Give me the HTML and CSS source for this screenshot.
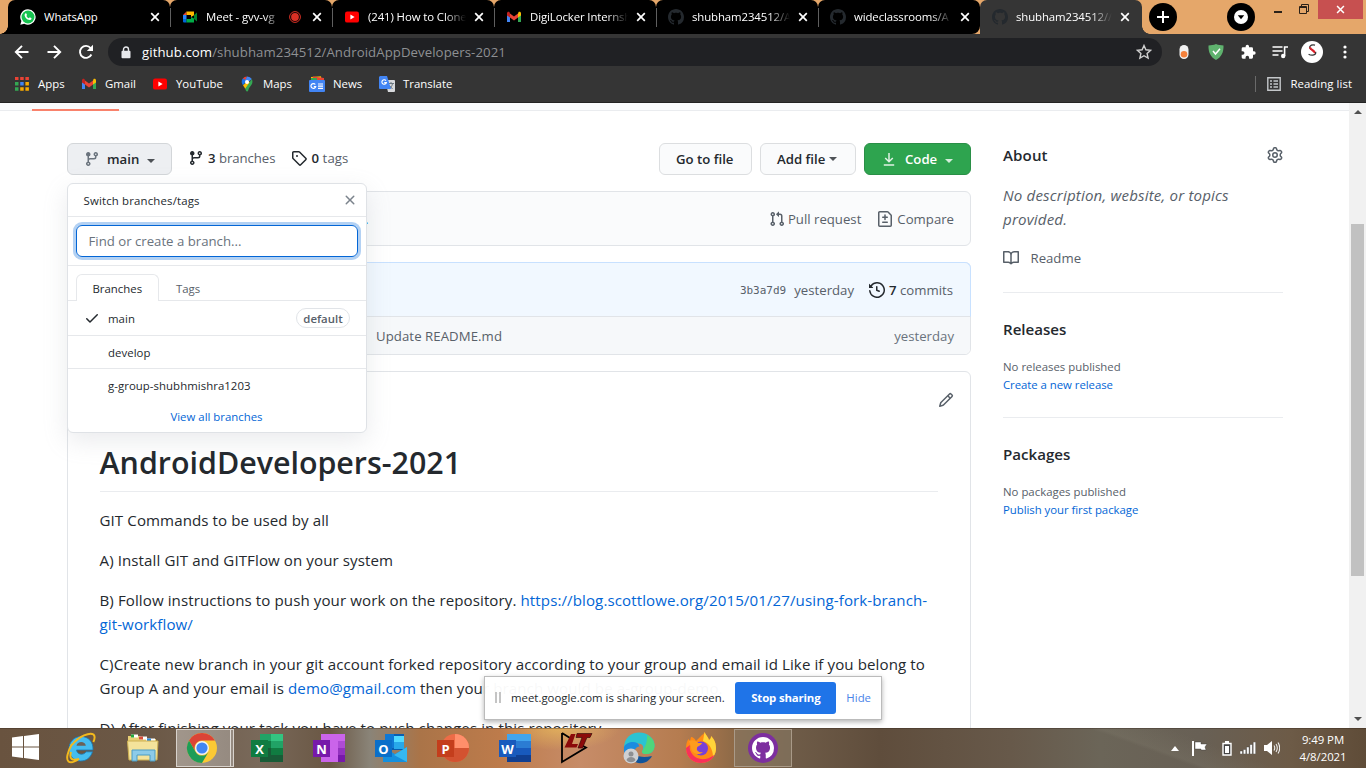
FILE: index.html
```html
<!DOCTYPE html>
<html lang="en">
<head>
<meta charset="utf-8">
<title>shubham234512/AndroidAppDevelopers-2021</title>
<link rel="stylesheet" href="styles.css">
</head>
<body>
<svg class="defs" width="0" height="0">
  <symbol id="branch" viewBox="0 0 16 16"><path d="M11.75 2.5a.75.75 0 100 1.5.75.75 0 000-1.5zm-2.25.75a2.25 2.25 0 113 2.122V6A2.5 2.5 0 0110 8.5H6a1 1 0 00-1 1v1.128a2.251 2.251 0 11-1.5 0V5.372a2.25 2.25 0 111.5 0v1.836A2.492 2.492 0 016 7h4a1 1 0 001-1v-.628A2.25 2.25 0 019.5 3.25zM4.25 12a.75.75 0 100 1.5.75.75 0 000-1.5zM3.5 3.25a.75.75 0 111.5 0 .75.75 0 01-1.5 0z"/></symbol>
  <symbol id="tag" viewBox="0 0 16 16"><path fill-rule="evenodd" d="M2.5 7.775V2.75a.25.25 0 01.25-.25h5.025a.25.25 0 01.177.073l6.25 6.25a.25.25 0 010 .354l-5.025 5.025a.25.25 0 01-.354 0l-6.25-6.25a.25.25 0 01-.073-.177zm-1.5 0V2.75C1 1.784 1.784 1 2.75 1h5.025c.464 0 .91.184 1.238.513l6.25 6.25a1.75 1.75 0 010 2.474l-5.026 5.026a1.75 1.75 0 01-2.474 0l-6.25-6.25A1.75 1.75 0 011 7.775zM6 5a1 1 0 100 2 1 1 0 000-2z"/></symbol>
  <symbol id="pull" viewBox="0 0 16 16"><path d="M7.177 3.073L9.573.677A.25.25 0 0110 .854v4.792a.25.25 0 01-.427.177L7.177 3.427a.25.25 0 010-.354zM3.75 2.5a.75.75 0 100 1.5.75.75 0 000-1.5zm-2.25.75a2.25 2.25 0 113 2.122v5.256a2.251 2.251 0 11-1.5 0V5.372A2.25 2.25 0 011.5 3.25zM11 2.5h-1V4h1a1 1 0 011 1v5.628a2.251 2.251 0 101.5 0V5A2.5 2.5 0 0011 2.5zm1 10.25a.75.75 0 111.5 0 .75.75 0 01-1.5 0zM3.75 12a.75.75 0 100 1.5.75.75 0 000-1.5z"/></symbol>
  <symbol id="diff" viewBox="0 0 16 16"><path d="M2.75 1.5a.25.25 0 00-.25.25v12.5c0 .138.112.25.25.25h10.5a.25.25 0 00.25-.25V4.664a.25.25 0 00-.073-.177l-2.914-2.914a.25.25 0 00-.177-.073H2.75zM1 1.75C1 .784 1.784 0 2.75 0h7.586c.464 0 .909.184 1.237.513l2.914 2.914c.329.328.513.773.513 1.237v9.586A1.75 1.75 0 0113.25 16H2.75A1.75 1.75 0 011 14.25V1.75zm7 1.5a.75.75 0 01.75.75v1.5h1.5a.75.75 0 010 1.5h-1.5v1.5a.75.75 0 01-1.5 0V7h-1.5a.75.75 0 010-1.5h1.5V4A.75.75 0 018 3.25zm-3 8a.75.75 0 01.75-.75h4.5a.75.75 0 010 1.5h-4.5a.75.75 0 01-.75-.75z"/></symbol>
  <symbol id="history" viewBox="0 0 16 16"><path d="M1.643 3.143L.427 1.927A.25.25 0 000 2.104V5.75c0 .138.112.25.25.25h3.646a.25.25 0 00.177-.427L2.715 4.215a6.5 6.5 0 11-1.18 4.458.75.75 0 10-1.493.154 8.001 8.001 0 101.6-5.684zM7.75 4a.75.75 0 01.75.75v2.992l2.028.812a.75.75 0 01-.557 1.392l-2.5-1A.75.75 0 017 8.25v-3.5A.75.75 0 017.75 4z"/></symbol>
  <symbol id="pencil" viewBox="0 0 16 16"><path d="M11.013 1.427a1.75 1.75 0 012.474 0l1.086 1.086a1.75 1.75 0 010 2.474l-8.61 8.61c-.21.21-.47.364-.756.445l-3.251.93a.75.75 0 01-.927-.928l.929-3.25a1.75 1.75 0 01.445-.758l8.61-8.61zm1.414 1.06a.25.25 0 00-.354 0L10.811 3.75l1.439 1.44 1.263-1.263a.25.25 0 000-.354l-1.086-1.086zM11.189 6.25L9.75 4.81l-6.286 6.287a.25.25 0 00-.064.108l-.558 1.953 1.953-.558a.249.249 0 00.108-.064l6.286-6.286z"/></symbol>
  <symbol id="book" viewBox="0 0 16 16"><path fill-rule="evenodd" d="M0 1.75A.75.75 0 01.75 1h4.253c1.227 0 2.317.59 3 1.501A3.744 3.744 0 0111.006 1h4.245a.75.75 0 01.75.75v10.5a.75.75 0 01-.75.75h-4.507a2.25 2.25 0 00-1.591.659l-.622.621a.75.75 0 01-1.06 0l-.622-.621A2.25 2.25 0 005.258 13H.75a.75.75 0 01-.75-.75V1.75zm8.755 3a2.25 2.25 0 012.25-2.25H14.5v9h-3.757c-.71 0-1.4.201-1.992.572l.004-7.322zm-1.504 7.324l.004-5.073-.002-2.253A2.25 2.25 0 005.003 2.5H1.5v9h3.757a3.75 3.75 0 011.994.574z"/></symbol>
  <symbol id="check" viewBox="0 0 16 16"><path d="M13.78 4.22a.75.75 0 010 1.06l-7.25 7.25a.75.75 0 01-1.06 0L2.22 9.28a.75.75 0 011.06-1.06L6 10.94l6.72-6.72a.75.75 0 011.06 0z"/></symbol>
  <symbol id="x" viewBox="0 0 16 16"><path d="M3.72 3.72a.75.75 0 011.06 0L8 6.94l3.22-3.22a.75.75 0 111.06 1.06L9.06 8l3.22 3.22a.75.75 0 11-1.06 1.06L8 9.06l-3.22 3.22a.75.75 0 01-1.06-1.06L6.94 8 3.72 4.78a.75.75 0 010-1.06z"/></symbol>
  <symbol id="gear" viewBox="0 0 16 16"><path fill-rule="evenodd" d="M8 0a8.2 8.2 0 0 1 .701.031C9.444.095 9.99.645 10.16 1.29l.288 1.107c.018.066.079.158.212.224.231.114.454.243.668.386.123.082.233.09.299.071l1.103-.303c.644-.176 1.392.021 1.82.63.27.385.506.792.704 1.218.315.675.111 1.422-.364 1.891l-.814.806c-.049.048-.098.147-.088.294.016.257.016.515 0 .772-.01.147.038.246.088.294l.814.806c.475.469.679 1.216.364 1.891a7.977 7.977 0 0 1-.704 1.217c-.428.61-1.176.807-1.82.63l-1.102-.302c-.067-.019-.177-.011-.3.071a5.909 5.909 0 0 1-.668.386c-.133.066-.194.158-.211.224l-.29 1.106c-.168.646-.715 1.196-1.458 1.26a8.006 8.006 0 0 1-1.402 0c-.743-.064-1.289-.614-1.458-1.26l-.289-1.106c-.018-.066-.079-.158-.212-.224a5.738 5.738 0 0 1-.668-.386c-.123-.082-.233-.09-.299-.071l-1.103.303c-.644.176-1.392-.021-1.82-.63a8.12 8.12 0 0 1-.704-1.218c-.315-.675-.111-1.422.363-1.891l.815-.806c.05-.048.098-.147.088-.294a6.214 6.214 0 0 1 0-.772c.01-.147-.038-.246-.088-.294l-.815-.806C.635 6.045.431 5.298.746 4.623a7.92 7.92 0 0 1 .704-1.217c.428-.61 1.176-.807 1.82-.63l1.102.302c.067.019.177.011.3-.071.214-.143.437-.272.668-.386.133-.066.194-.158.211-.224l.29-1.106C6.009.645 6.556.095 7.299.03 7.53.01 7.764 0 8 0Zm-.571 1.525c-.036.003-.108.036-.137.146l-.289 1.105c-.147.561-.549.967-.998 1.189-.173.086-.34.183-.5.29-.417.278-.97.423-1.529.27l-1.103-.303c-.109-.03-.175.016-.195.045-.22.312-.412.644-.573.99-.014.031-.021.11.059.19l.815.806c.411.406.562.957.53 1.456a4.709 4.709 0 0 0 0 .582c.032.499-.119 1.05-.53 1.456l-.815.806c-.081.08-.073.159-.059.19.162.346.353.677.573.989.02.03.085.076.195.046l1.102-.303c.56-.153 1.113-.008 1.53.27.161.107.328.204.501.29.447.222.85.629.997 1.189l.289 1.105c.029.109.101.143.137.146a6.6 6.6 0 0 0 1.142 0c.036-.003.108-.036.137-.146l.289-1.105c.147-.561.549-.967.998-1.189.173-.086.34-.183.5-.29.417-.278.97-.423 1.529-.27l1.103.303c.109.029.175-.016.195-.045.22-.313.411-.644.573-.99.014-.031.021-.11-.059-.19l-.815-.806c-.411-.406-.562-.957-.53-1.456a4.709 4.709 0 0 0 0-.582c-.032-.499.119-1.05.53-1.456l.815-.806c.081-.08.073-.159.059-.19a6.464 6.464 0 0 0-.573-.989c-.02-.03-.085-.076-.195-.046l-1.102.303c-.56.153-1.113.008-1.53-.27a4.44 4.44 0 0 0-.501-.29c-.447-.222-.85-.629-.997-1.189l-.289-1.105c-.029-.11-.101-.143-.137-.146a6.6 6.6 0 0 0-1.142 0ZM11 8a3 3 0 1 1-6 0 3 3 0 0 1 6 0ZM9.5 8a1.5 1.5 0 1 0-3.001.001A1.5 1.5 0 0 0 9.5 8Z"/></symbol>
  <symbol id="octocat" viewBox="0 0 16 16"><path d="M8 0C3.58 0 0 3.58 0 8c0 3.54 2.29 6.53 5.47 7.59.4.07.55-.17.55-.38 0-.19-.01-.82-.01-1.49-2.01.37-2.53-.49-2.69-.94-.09-.23-.48-.94-.82-1.13-.28-.15-.68-.52-.01-.53.63-.01 1.08.58 1.23.82.72 1.21 1.87.87 2.33.66.07-.52.28-.87.51-1.07-1.78-.2-3.64-.89-3.64-3.95 0-.87.31-1.59.82-2.15-.08-.2-.36-1.02.08-2.12 0 0 .67-.21 2.2.82.64-.18 1.32-.27 2-.27.68 0 1.36.09 2 .27 1.53-1.04 2.2-.82 2.2-.82.44 1.1.16 1.92.08 2.12.51.56.82 1.27.82 2.15 0 3.07-1.87 3.75-3.65 3.95.29.25.54.73.54 1.48 0 1.07-.01 1.93-.01 2.2 0 .21.15.46.55.38A8.013 8.013 0 0016 8c0-4.42-3.58-8-8-8z"/></symbol>
  <symbol id="close" viewBox="0 0 10 10"><path d="M1.2 1.2l7.6 7.6M8.8 1.2L1.2 8.8" stroke="currentColor" stroke-width="1.7" fill="none"/></symbol>
  <symbol id="youtube" viewBox="0 0 16 16"><rect x="1" y="2.6" width="14" height="11" rx="2.2" fill="#f00"/><path d="M6.4 5.6v5l4.2-2.5z" fill="#fff"/></symbol>
  <symbol id="gmail" viewBox="0 0 16 16"><path d="M1 4v9h3V7z" fill="#4285f4"/><path d="M15 4v9h-3V7z" fill="#34a853"/><path d="M12 4.6v4L15 6.4V4.2c0-1.4-1.5-2-2.4-1.2z" fill="#fbbc04"/><path d="M4 4.6v4L1 6.4V4.2C1 2.8 2.500 2.200 3.400 3z" fill="#c5221f"/><path d="M4 4.400l4 3 4-3v4.200l-4 3-4-3z" fill="#ea4335"/></symbol>
</svg>

<header class="titlebar">
  <div class="tab tab-first">
    <svg class="fav" viewBox="0 0 16 16"><path d="M8 .3A7.700 7.700 0 0 0 1.400 12L.3 15.800l4-1A7.700 7.700 0 1 0 8 .3z" fill="#fff"/><circle cx="8" cy="8" r="6.500" fill="#16c350"/><path d="M5.300 4.400c.6-.5 1-.2 1.200.3l.5 1.200-.6 1c.6 1.200 1.400 1.900 2.500 2.400l.9-1 1.700.9c.2.900-.8 1.900-1.900 1.900C7 11 4.600 8 4.600 6.100c0-.8.3-1.300.7-1.700z" fill="#fff"/></svg>
    <span class="tab-title">WhatsApp</span>
    <svg class="tab-x"><use href="#close"/></svg>
  </div>
  <div class="tab">
    <svg class="fav" viewBox="0 0 16 16"><path d="M1 6h3.500v4H1z" fill="#2684fc"/><path d="M4.500 2.500V6H1z" fill="#ea4335"/><path d="M4.500 2.500H12v3.800L9 8V6H4.500z" fill="#ffba00"/><path d="M1 10h3.500v3.500H2a1 1 0 0 1-1-1z" fill="#0066da"/><path d="M4.500 10H9V8l3 1.500v4H4.500z" fill="#00ac47"/><path d="M12 6l3-2.500v9L12 10z" fill="#00832d"/></svg>
    <span class="tab-title tab-title-short fade">Meet - gvv-vg</span>
    <svg class="rec" viewBox="0 0 12 12"><circle cx="6" cy="6" r="5.400" fill="none" stroke="#d93025"/><circle cx="6" cy="6" r="3.900" fill="#d93025"/></svg>
    <svg class="tab-x"><use href="#close"/></svg>
  </div>
  <div class="tab">
    <svg class="fav"><use href="#youtube"/></svg>
    <span class="tab-title fade">(241) How to Clone</span>
    <svg class="tab-x"><use href="#close"/></svg>
  </div>
  <div class="tab">
    <svg class="fav"><use href="#gmail"/></svg>
    <span class="tab-title fade">DigiLocker Internsh</span>
    <svg class="tab-x"><use href="#close"/></svg>
  </div>
  <div class="tab">
    <svg class="fav cat"><use href="#octocat"/></svg>
    <span class="tab-title fade">shubham234512/A</span>
    <svg class="tab-x"><use href="#close"/></svg>
  </div>
  <div class="tab tab-before">
    <svg class="fav cat"><use href="#octocat"/></svg>
    <span class="tab-title fade">wideclassrooms/A</span>
    <svg class="tab-x"><use href="#close"/></svg>
  </div>
  <div class="tab tab-active">
    <svg class="fav cat"><use href="#octocat"/></svg>
    <span class="tab-title fade">shubham234512//A</span>
    <svg class="tab-x"><use href="#close"/></svg>
  </div>
  <svg class="round-btn" viewBox="0 0 28 28"><circle cx="14" cy="14" r="14"/><path d="M14 8v12M8 14h12" stroke="#fff" stroke-width="2"/></svg>
  <svg class="round-btn search-tabs" viewBox="0 0 28 28"><circle cx="14" cy="14" r="14"/><circle cx="14" cy="14" r="7" fill="#fff"/><path d="M10.800 12.200h6.400L14 16.200z"/></svg>
  <div class="window-controls">
    <svg class="min" viewBox="0 0 8 2"><path d="M0 0h8v2H0z" fill="#2b2118"/></svg>
    <svg class="restore" viewBox="0 0 10 10"><path d="M2.500 2.500V.5h7v7H7.500M.5 2.500h7v7h-7zM.5 3.500h7" fill="none" stroke="#2b2118"/></svg>
    <div class="win-close"><svg><use href="#close"/></svg></div>
  </div>
</header>

<div class="toolbar">
  <svg class="nav" viewBox="0 0 16 16"><path d="M14.500 8H2M8 1.800L1.800 8 8 14.200" fill="none" stroke="#fff" stroke-width="1.900"/></svg>
  <svg class="nav" viewBox="0 0 16 16"><path d="M1.500 8H14M8 1.800L14.200 8 8 14.200" fill="none" stroke="#fff" stroke-width="1.900"/></svg>
  <svg class="nav" viewBox="0 0 16 16"><path d="M13.400 10.500A6 6 0 1 1 12.600 4L13 4.500" fill="none" stroke="#fff" stroke-width="1.900"/><path d="M15 .8v6.200H8.800z" fill="#fff"/></svg>
  <div class="omnibox">
    <svg class="lock" viewBox="0 0 10 13"><path d="M2.500 5V3.500a2.500 2.500 0 0 1 5 0V5" fill="none" stroke="#e8eaed" stroke-width="1.400"/><rect x=".5" y="4.800" width="9" height="7.400" rx="1" fill="#e8eaed"/></svg>
    <span class="url"><b>github.com</b>/shubham234512/AndroidAppDevelopers-2021</span>
    <svg class="star" viewBox="0 0 16 16"><path d="M8 1.500l1.900 4.300 4.700.5-3.500 3.100 1 4.700L8 11.700l-4.100 2.400 1-4.700L1.400 6.300l4.700-.5z" fill="none" stroke="#d0d0d0" stroke-width="1.400"/></svg>
  </div>
  <svg class="ext" viewBox="0 0 16 16"><rect x="3.500" y="1" width="9" height="14" rx="4.500" fill="#f1f1f1"/><circle cx="8" cy="10.300" r="3.300" fill="#f5813a"/></svg>
  <svg class="ext" viewBox="0 0 16 16"><path d="M8 0c2.300 1 5 1.300 7.500 1.500C15.800 8 13.600 13 8 16 2.400 13 .2 8 .5 1.500 3 1.300 5.700 1 8 0z" fill="#5fb26e"/><path d="M5 7l2.500 3L12 4.800" stroke="#fff" stroke-width="1.500" fill="none"/></svg>
  <svg class="ext" viewBox="0 0 24 24"><path d="M21 11h-1.500V7a2 2 0 0 0-2-2h-4V3.500a2.500 2.500 0 0 0-5 0V5h-4a2 2 0 0 0-2 2v3.800H4a2.700 2.700 0 0 1 0 5.400H2.500V20a2 2 0 0 0 2 2h3.800v-1.500a2.700 2.700 0 0 1 5.400 0V22h3.800a2 2 0 0 0 2-2v-4H21a2.500 2.500 0 0 0 0-5z" fill="#fff"/></svg>
  <svg class="ext" viewBox="0 0 16 16"><path d="M.5 3h10M.5 7h10M.5 11h6" stroke="#fff" stroke-width="1.700"/><path d="M12.600 12V3H16" stroke="#fff" stroke-width="1.600" fill="none"/><circle cx="11.200" cy="12" r="2.200" fill="#fff"/></svg>
  <svg class="avatar" viewBox="0 0 22 22"><circle cx="11" cy="11" r="11" fill="#fff"/><path d="M14 4.200C9.500 3.200 7 6.200 10 8.400" fill="none" stroke="#333" stroke-width="1.300"/><path d="M9 6.200c0 3 5.400 3.200 5 6.200" fill="none" stroke="#d8202a" stroke-width="2.200"/><path d="M14.600 11c1 2.800-3.600 4.200-7 2.200" fill="none" stroke="#333" stroke-width="1.300"/></svg>
  <svg class="kebab" viewBox="0 0 4 14"><circle cx="2" cy="2" r="1.600"/><circle cx="2" cy="7" r="1.600"/><circle cx="2" cy="12" r="1.600"/></svg>
</div>

<nav class="bookmarks">
  <div class="bm bm-apps"><svg viewBox="0 0 14 14"><g fill="#ea4335"><path d="M0 0h3.500v3H0zM5.200 0h3.500v3H5.200zM10.400 0h3.500v3h-3.500z"/></g><path d="M0 5h3.500v3.500H0zM0 10.300h3.500v3.500H0z" fill="#34a853"/><path d="M5.200 5h3.500v3.500H5.200z" fill="#4285f4"/><path d="M10.400 5h3.500v3.500h-3.500zM5.200 10.300h3.500v3.500H5.200zM10.400 10.300h3.500v3.500h-3.500z" fill="#f9ab00"/></svg>Apps</div>
  <div class="bm bm-gmail"><svg><use href="#gmail"/></svg>Gmail</div>
  <div class="bm bm-yt"><svg><use href="#youtube"/></svg>YouTube</div>
  <div class="bm bm-maps"><svg viewBox="0 0 16 16"><path d="M8 .5a5.400 5.400 0 0 0-4.200 2L6.500 5z" fill="#ea4335"/><path d="M3.800 2.500C2 5 2.600 7.500 4 9.300l4-4.500z" fill="#1a73e8"/><path d="M8 .5l-2 4 3 2 3.800-3.400A5.400 5.400 0 0 0 8 .5z" fill="#4285f4"/><path d="M4 9.300c1 1.400 1.800 2.400 2.300 3.600L12 7 9 5z" fill="#fbbc04"/><path d="M12.800 3.100c1.400 3 .4 5-1.200 7-1.500 1.800-2 3-2.400 4.500-.3 1.200-1.900 1.200-2.300 0l-.7-1.800z" fill="#34a853"/><circle cx="8" cy="5.900" r="2" fill="#fff"/></svg>Maps</div>
  <div class="bm bm-news"><svg viewBox="0 0 16 16"><path d="M2 1l10-.8.5 4H2z" fill="#fbbc04"/><path d="M4 .5l11 1.500v5H3z" fill="#ea4335"/><path d="M2 2h6v4H2z" fill="#34a853"/><rect y="4" width="16" height="12" rx="1" fill="#4285f4"/><path d="M6.300 8.500a2.400 2.400 0 1 0 .4 2H4.800M9 8h5M9 10.200h5M9 12.400h5" stroke="#fff" stroke-width="1.200" fill="none"/></svg>News</div>
  <div class="bm bm-translate"><svg viewBox="0 0 16 16"><path d="M6 4h9a1 1 0 0 1 1 1v10a1 1 0 0 1-1 1H9z" fill="#d7d9dc"/><path d="M9 7.500h6M12 6v1.500M10 13c2-1.500 3.200-3 3.500-5.500M10.500 9.500l3 3.500" stroke="#6b7780" fill="none"/><path d="M1 0h7l4 13H1a1 1 0 0 1-1-1V1z" fill="#4285f4"/><path d="M7 4.600a2.300 2.300 0 1 0 .4 2H5.200" stroke="#fff" stroke-width="1.100" fill="none"/></svg>Translate</div>
  <div class="bm reading"><svg viewBox="0 0 14 14"><path d="M.8.8h12.400v12.400H.8zM3 4h2M6.500 4H11M3 7h2M6.500 7H11M3 10h2M6.500 10H11" fill="none" stroke="#c4c7ca" stroke-width="1.400"/></svg>Reading list</div>
</nav>

<div class="viewport">
  <div class="page">
    <div class="repo-nav"><i></i></div>
    <div class="layout">
      <main class="main">
        <div class="file-nav">
          <button class="btn btn-branch"><svg class="oi"><use href="#branch"/></svg>main<i class="caret"></i></button>
          <a class="stat stat-branches"><svg class="oi"><use href="#branch"/></svg><b>3</b> branches</a>
          <a class="stat stat-tags"><svg class="oi"><use href="#tag"/></svg><b>0</b> tags</a>
          <button class="btn btn-goto">Go to file</button>
          <button class="btn btn-add">Add file<i class="caret"></i></button>
          <button class="btn btn-code"><svg class="oi" viewBox="0 0 16 16"><path d="M8 2v8.500M4.200 7L8 10.700 11.800 7M2.800 14h10.400" fill="none" stroke="currentColor" stroke-width="1.500"/></svg>Code<i class="caret"></i></button>
          <section class="menu">
            <div class="menu-head">Switch branches/tags<svg class="oi"><use href="#x"/></svg></div>
            <div class="menu-filter"><div class="field">Find or create a branch...</div></div>
            <div class="menu-tabs"><span class="mt on">Branches</span><span class="mt">Tags</span></div>
            <div class="item current"><svg class="oi"><use href="#check"/></svg><span>main</span><em>default</em></div>
            <div class="item">develop</div>
            <div class="item last">g-group-shubhmishra1203</div>
            <a class="all">View all branches</a>
          </section>
        </div>
        <div class="box compare"><span class="dot">.</span><a class="pr"><svg class="oi"><use href="#pull"/></svg>Pull request</a><a><svg class="oi"><use href="#diff"/></svg>Compare</a></div>
        <div class="files">
          <div class="commit"><code>3b3a7d9</code><span class="when">yesterday</span><svg class="oi"><use href="#history"/></svg><span class="commits"><b>7</b> commits</span></div>
          <div class="file-row"><span>Update README.md</span><span>yesterday</span></div>
        </div>
        <div class="readme">
          <div class="readme-head"><svg class="oi"><use href="#pencil"/></svg></div>
          <article>
            <h1>AndroidDevelopers-2021</h1>
            <p>GIT Commands to be used by all</p>
            <p>A) Install GIT and GITFlow on your system</p>
            <p>B) Follow instructions to push your work on the repository. <a>https://blog.scottlowe.org/2015/01/27/using-fork-branch-<br>git-workflow/</a></p>
            <p>C)Create new branch in your git account forked repository according to your group and email id Like if you belong to<br>Group A and your email is <a>demo@gmail.com</a> then your branch would be a-group-demo.</p>
            <p>D) After finishing your task you have to push changes in this repository</p>
          </article>
        </div>
      </main>
      <aside class="side">
        <section class="about">
          <h2>About<svg class="oi"><use href="#gear"/></svg></h2>
          <p class="desc">No description, website, or topics<br>provided.</p>
          <div class="readme-link"><svg class="oi"><use href="#book"/></svg>Readme</div>
        </section>
        <section class="releases"><h2>Releases</h2><p>No releases published</p><a>Create a new release</a></section>
        <section class="packages"><h2>Packages</h2><p>No packages published</p><a>Publish your first package</a></section>
      </aside>
    </div>
  </div>
  <div class="scrollbar"><i class="up"></i><div class="thumb"></div><i class="down"></i></div>
  <div class="share">
    <i class="grip"></i><span>meet.google.com is sharing your screen.</span><button>Stop sharing</button><a>Hide</a>
  </div>
</div>

<footer class="taskbar">
  <div class="start"><svg viewBox="0 0 27 26"><path d="M0 3.600l11-1.500v10.400H0zM12 2l15-2v12.500H12zM0 13.500h11v10.400L0 22.400zM12 13.500h15V26l-15-2z" fill="#fff"/></svg></div>
  <div class="task"><svg viewBox="0 0 32 32"><path d="M16 4.500c7 0 12.500 5 12 13.500H11.500c.5 5 7.500 5.500 9.500 1.800h6.500C25.500 26 21 29 15.700 29 9 29 4 24 4 17S9 4.500 16 4.500z" fill="#45bdf0" stroke="#1679b8" stroke-width=".8"/><path d="M11.500 13.800c.6-5 8.800-5 9.300 0z" fill="#6b6258"/><path d="M7 12C3 19 .5 27 3.500 29.500 6 31.500 11 29 14 27 7 29 4 27 6 20M7 13C14 4 25 0 28.500 2.500c2 2 1 5-.2 7.500" fill="none" stroke="#f3b91d" stroke-width="2"/></svg></div>
  <div class="task"><svg viewBox="0 0 32 32"><path d="M1 4h12l2 3h14v4H1z" fill="#e8cf74"/><path d="M4 2.500h7v3H4z" fill="#fff"/><path d="M4 2.500h3v3H4z" fill="#25a83c"/><path d="M12 4.500h8v3h-8z" fill="#fff"/><path d="M12 4.500h4v3h-4z" fill="#d84e3a"/><path d="M19 6.500h9v3h-9z" fill="#fff"/><path d="M20 6.500h4v3h-4z" fill="#2d8ce0"/><path d="M.5 9H31l-1 19H2z" fill="#f4e39b" stroke="#cdb052"/><path d="M5 18h23v11h-5v-6H10v6H5z" fill="#8ccbe8" stroke="#4a9cc4"/></svg></div>
  <div class="task task-chrome"><svg viewBox="0 0 32 32"><circle cx="16" cy="16" r="15" fill="#fbc934"/><path d="M3 8.500A15 15 0 0 1 29 8.500H16a7.500 7.500 0 0 0-6.500 11.200z" fill="#db4437"/><path d="M3 8.500l6.500 11.200A7.500 7.500 0 0 0 22.500 20L16 31A15 15 0 0 1 3 8.500z" fill="#1e9d57"/><circle cx="16" cy="16" r="7" fill="#f3f3f3"/><circle cx="16" cy="16" r="5.600" fill="#4285f4"/></svg></div>
  <div class="task"><svg viewBox="0 0 32 32"><path d="M9 2h23v28H9z" fill="#21a366"/><path d="M20 2h12v7H20z" fill="#33c481"/><path d="M9 9h11v7H9zM20 16h12v7H20z" fill="#107c41"/><path d="M9 16h11v7H9zM9 23h23v7H9z" fill="#185c37"/><path d="M0 8h17v17H0z" fill="#107c41"/><text class="glyph" x="8.500" y="21.500">X</text></svg></div>
  <div class="task"><svg viewBox="0 0 32 32"><path d="M8 2h24v28H8z" fill="#ca64ea"/><path d="M25 9h7v7h-7z" fill="#ae4bd5"/><path d="M25 16h7v7h-7z" fill="#9332bf"/><path d="M25 23h7v7h-7z" fill="#7719aa"/><path d="M0 8h17v17H0z" fill="#7719aa"/><text class="glyph" x="8.500" y="21.500">N</text></svg></div>
  <div class="task"><svg viewBox="0 0 32 32"><path d="M10 2h19v16H10z" fill="#0a5eb0"/><path d="M19 4h10v6H19z" fill="#50d9ff"/><path d="M19 10h10v7H19z" fill="#28a8ea"/><path d="M10 2h9v14h-9z" fill="#0f78d4"/><path d="M8 15l12 7 12-7v15H8z" fill="#1490df"/><path d="M32 15L19 23l13 7z" fill="#35b8f1"/><path d="M0 8h17v17H0z" fill="#0a6fc9"/><text class="glyph" x="8.500" y="21.500">O</text></svg></div>
  <div class="task"><svg viewBox="0 0 32 32"><circle cx="18" cy="16" r="14" fill="#ed6c47"/><path d="M18 2a14 14 0 0 1 14 14H18z" fill="#ff8f6b"/><path d="M4 16h28a14 14 0 0 1-28 0z" fill="#d35230"/><path d="M0 8h17v17H0z" fill="#c43e1c"/><text class="glyph" x="8.500" y="21.500">P</text></svg></div>
  <div class="task"><svg viewBox="0 0 32 32"><path d="M8 2h24v7H8z" fill="#41a5ee"/><path d="M8 9h24v7H8z" fill="#2b7cd3"/><path d="M8 16h24v7H8z" fill="#185abd"/><path d="M8 23h24v7H8z" fill="#103f91"/><path d="M0 8h17v17H0z" fill="#185abd"/><text class="glyph" x="8.500" y="21.500">W</text></svg></div>
  <div class="task"><svg viewBox="0 0 32 32"><path d="M1 1v29l24-14.500-4-2M1 1l8 5" fill="none" stroke="#000" stroke-width="1.800"/><path d="M10 2h4.500L11 12h6l-1.500 3.500H3.500z" fill="#8b0a0a"/><path d="M16 1.500h15l-2 4h-3L21.500 16H17l4-10.500h-6z" fill="#8b0a0a" stroke="#2a0505" stroke-width=".6"/></svg></div>
  <div class="task"><svg viewBox="0 0 32 32"><path d="M1 16C1 6 8 .5 16 .5c9 0 15.500 6 15.500 13 0 6-4 8.500-8.500 8.500-3 0-5-1.500-3.500-3.500 1.500-2.500 1-7-4.500-7C8 11.500 2 13 1 16z" fill="#2bc3d2"/><path d="M24 3c5 2.500 7.500 6.500 7.500 10.500 0 6-4 8.500-8.500 8.500-3 0-5-1.500-3.500-3.500 3-4 5-9 4.500-15.500z" fill="#4fd67b"/><path d="M1 15c3-6 14-7 15.500-.5C12 15 10 19 13 24l-8 2C2 24 .5 20 1 15z" fill="#1b8ce0"/><path d="M11 18c0 6 7 8.500 18 6-4 8-15 10-20 3z" fill="#10549b"/><circle cx="8" cy="24" r="7.500" fill="#cfd0d2"/><circle cx="8" cy="22" r="2.500" fill="#8d8f92"/><path d="M3.500 28c1-4 8-4 9 0-2 3-7 3-9 0z" fill="#8d8f92"/></svg></div>
  <div class="task"><svg viewBox="0 0 32 32"><path d="M17 3c2-1 2-2 2.500-3 1 3 4 5 4.500 8 2-1 2-3 2-4 4 4 5 8 5 12.500C31 25 24.500 31 16 31S1 25 1 16.500C1 12 2 9 3.500 7L5 9l1-4c2 0 4 2 5 4z" fill="#ff8a16"/><path d="M19.500 0c1 3 4 5 4.500 8 2-1 2-3 2-4 4 4 5 8 5 12.500 0 3-1 6-3 8.500 0-8-4-14-10-16z" fill="#ffd43a"/><path d="M1 16c0 9 7 15 15 15 6 0 11-3 13.500-8C21 29 12 28 8 23c-3-3-4-7-3-10z" fill="#f8315a"/><circle cx="16" cy="16.500" r="7" fill="#7a41d8"/><path d="M4 9c4-2 8 0 9 2h4c-1 3-5 3-5 5-1 3 3 5 6 4-4 4-12 2-12-5z" fill="#ff9c1d"/></svg></div>
  <div class="task task-github"><svg viewBox="0 0 32 32"><circle cx="16" cy="16" r="15" fill="#7d2f9f"/><use href="#octocat" x="5" y="5" width="22" height="22" fill="#fff"/></svg></div>
  <div class="tray">
    <svg class="t-up" viewBox="0 0 8 5"><path d="M4 0l4 5H0z" fill="#fff"/></svg>
    <svg class="t-flag" viewBox="0 0 16 15"><path d="M1 0v15" stroke="#fff" stroke-width="2"/><path d="M3 1h6v2h6l-2 3 1 3H9V8H3z" fill="#fff" stroke="#333" stroke-width=".4"/></svg>
    <svg class="t-bat" viewBox="0 0 10 15"><path d="M3 0h4v2H3z" fill="#fff"/><path d="M1 2.500h8v11.500H1z" fill="#444" stroke="#fff" stroke-width="1.400"/><path d="M3 5h4v7H3z" fill="#fff"/></svg>
    <svg class="t-net" viewBox="0 0 16 12"><path d="M0 9h2.500v3H0zM3.300 7.500h2.500V12H3.300zM6.600 5h2.500v7H6.600zM9.900 2.500h2.500V12H9.900zM13.200 0h2.500v12h-2.500z" fill="#fff" stroke="#333" stroke-width=".4"/></svg>
    <svg class="t-vol" viewBox="0 0 16 14"><path d="M0 4h3l5-4v14l-5-4H0z" fill="#fff"/><path d="M10 4.500q1.500 2.500 0 5M12 3q2.600 4 0 8M14 1.500q3.400 5.500 0 11" fill="none" stroke="#eee" stroke-width="1.100"/></svg>
    <div class="clock"><span>9:49 PM</span><span>4/8/2021</span></div>
  </div>
</footer>
</body>
</html>
```
FILE: styles.css
```css
* { box-sizing: border-box; }
html, body { margin: 0; height: 768px; overflow: hidden; }
body {
  display: flex; flex-direction: column; width: 1366px;
  font-family: "Open Sans", "Noto Sans", sans-serif; font-size: 13.2px; color: #24292e; background: #fff;
}
.defs { position: absolute; }
svg { flex: none; display: block; }
button { font-family: inherit; }
h1, h2, p { margin: 0; }

/* Tab strip */
.titlebar { display: flex; height: 34px; background: #e5a76a; padding-left: 8px; color: #fff; }
.tab { position: relative; display: flex; align-items: center; width: 162px; padding: 0 9px 0 12px; background: #000; border-radius: 7px 7px 0 0; font-size: 11.4px; }
.tab + .tab::before { content: ""; position: absolute; left: 0; top: 8px; width: 1px; height: 19px; background: #5f5f5f; }
.tab-first::before { content: ""; position: absolute; left: -8px; bottom: 0; width: 8px; height: 8px; background: radial-gradient(circle at 0 0, transparent 7.5px, #000 8px); }
.tab.tab-active { background: #353535; padding-right: 11px; }
.tab.tab-active::before { display: none; }
.tab-before { border-radius: 7px 7px 8px 0; }
.tab-active::after { content: ""; position: absolute; right: -8px; bottom: 0; width: 8px; height: 8px; background: radial-gradient(circle at 100% 0, transparent 7.5px, #353535 8px); }
.fav { width: 16px; height: 16px; margin-right: 8px; }
.cat { fill: #24292e; }
.tab-title { width: 98px; overflow: hidden; white-space: nowrap; letter-spacing: -.1px; line-height: 18px; }
.tab-title-short { width: 75px; }
.fade { -webkit-mask-image: linear-gradient(90deg, #000 78%, transparent 100%); mask-image: linear-gradient(90deg, #000 78%, transparent 100%); }
.tab-x { width: 10px; height: 10px; margin-left: 8px; }
.rec { width: 12px; height: 12px; margin: 0 3px 0 8px; }
.tab-active .tab-title { width: 96px; }
.round-btn { width: 28px; height: 28px; margin: 3px 0 0 7px; }
.search-tabs { margin-left: 50px; }
.window-controls { display: flex; flex: 1; margin-left: 19px; }
.min { width: 8px; height: 2px; margin-top: 11px; }
.restore { width: 10px; height: 10px; margin: 4px 9px 0 17px; }
.win-close { width: 45px; height: 19px; background: #c75050; display: grid; place-items: center; }
.win-close svg { width: 9px; height: 9px; }

/* Address bar */
.toolbar { display: flex; align-items: center; height: 36px; background: #353535; padding: 0 0 0 14px; }
.nav { width: 16px; height: 16px; margin-right: 16px; }
.omnibox { display: flex; align-items: center; width: 1054px; height: 28px; margin: 0 14px 0 -2px; border-radius: 14px; background: #202124; padding: 0 10px 0 13px; }
.lock { width: 10px; height: 13px; margin-right: 11px; }
.url { flex: 1; color: #8e9093; font-size: 13.2px; line-height: 20px; letter-spacing: .08px; }
.url b { font-weight: 400; color: #fff; }
.star { width: 16px; height: 16px; }
.ext { width: 16px; height: 16px; margin-right: 16px; }
.avatar { width: 22px; height: 22px; margin: 0 20px 0 -3px; }
.kebab { width: 4px; height: 14px; fill: #fff; }

/* Bookmarks */
.bookmarks { display: flex; align-items: center; height: 33px; background: #353535; border-bottom: 1px solid #232323; padding: 0 0 5px 15px; color: #fff; font-size: 11.4px; }
.bm { display: flex; align-items: center; white-space: nowrap; }
.bm svg { width: 16px; height: 16px; margin-right: 8px; }
.bm-apps svg, .reading svg { width: 14px; height: 14px; }
.bm-apps { width: 66px; }
.bm-apps svg { margin-right: 9px; }
.bm-gmail { width: 71px; }
.bm-yt { width: 87px; }
.bm-maps { width: 70px; }
.bm-news { width: 70px; }
.reading { margin-left: auto; border-left: 1px solid #6a6a6a; padding-left: 11px; height: 16px; margin-right: 14px; letter-spacing: .05px; }
.reading svg { margin-right: 9px; }

/* Page area */
.viewport { position: relative; display: flex; height: 625px; overflow: hidden; }
.page { width: 1349px; }
.repo-nav { height: 8px; background: #fafbfc; border-bottom: 1px solid #eaecef; padding-left: 32px; }
.repo-nav i { display: block; position: relative; top: 6px; width: 87px; height: 2px; background: #f9826c; }
.layout { display: flex; padding: 32px 66px 0 67px; justify-content: space-between; }
.main { width: 904px; }
.oi { width: 16px; height: 16px; fill: currentColor; }
b { font-weight: 600; }
a { color: #0366d6; }

.file-nav { position: relative; display: flex; height: 32px; margin-bottom: 16px; }
.btn { display: flex; align-items: center; height: 32px; padding: 0 16px; border: 1px solid #dcdee0; border-radius: 6px; background: #fafbfc; font-size: 13.2px; font-weight: 600; color: #24292e; white-space: nowrap; }
.caret { display: block; border: 4px solid transparent; border-top-color: currentColor; border-bottom: 0; opacity: .8; }
.btn-branch { width: 105px; background: #edeff2; border-color: #d3d6d9; }
.btn-branch .oi { color: #6a737d; margin-right: 7px; }
.btn-branch .caret { margin: 3px 0 0 8px; }
.stat { display: flex; align-items: center; color: #586069; height: 30px; white-space: pre; font-size: 13.2px; }
.stat .oi, .stat b { color: #24292e; }
.stat-branches { margin-left: 16px; letter-spacing: -.05px; }
.stat .oi { margin-right: 4px; }
.stat-tags { margin-left: 16px; letter-spacing: .1px; }
.btn-goto { width: 93px; margin-left: auto; }
.btn-add { width: 96px; margin: 0 8px; }
.btn-add .caret { margin-left: 4px; }
.btn-code { width: 107px; background: #2ea44f; border-color: #2a8f47; color: #fff; }
.btn-code .oi { margin-right: 8px; opacity: .85; }
.btn-code .caret { margin: 3px 0 0 8px; }

/* Branch menu */
.menu { position: absolute; z-index: 5; left: 0; top: 40px; width: 300px; height: 250px; background: #fff; border: 1px solid #dfe2e6; border-radius: 6px; box-shadow: 0 8px 24px rgba(149,157,165,.2); font-size: 11.4px; }
.menu-head { display: flex; justify-content: space-between; align-items: center; height: 33px; padding: 0 8px 0 15.5px; border-bottom: 1px solid #e6e8eb; letter-spacing: .17px; }
.menu-head .oi { color: #7b838c; }
.menu-filter { height: 49px; padding: 8px; border-bottom: 1px solid #e6e8eb; }
.field { height: 32px; line-height: 30px; padding: 0 11.5px; border: 1px solid #0366d6; border-radius: 6px; box-shadow: 0 0 0 3px rgba(3,102,214,.3); color: #6a737d; font-size: 13.2px; }
.menu-tabs { display: flex; height: 35px; padding: 8px 8px 0; border-bottom: 1px solid #e6e8eb; }
.mt { height: 27px; line-height: 29px; padding: 0 17px; color: #586069; }
.on { color: #24292e; width: 83px; line-height: 28px; padding: 0 15.5px; background: #fff; border: 1px solid #e6e8eb; border-bottom: 0; border-radius: 6px 6px 0 0; }
.item { display: flex; align-items: center; height: 33px; padding: 0 16px 0 40px; border-bottom: 1px solid #e6e8eb; letter-spacing: .05px; }
.current { height: 35px; padding-left: 16px; }
.current .oi { margin-right: 8px; }
.current em { margin-left: auto; font-style: normal; font-weight: 600; color: #586069; border: 1px solid #e1e4e8; border-radius: 20px; height: 20px; line-height: 19px; width: 54px; text-align: center; letter-spacing: 0; }
.last { border: 0; }
.all { display: block; text-align: center; line-height: 30px; padding-right: 1px; }

.box { border: 1px solid #e1e4e8; border-radius: 6px; }
.compare { display: flex; align-items: center; height: 55px; background: #fafbfc; margin-bottom: 16px; padding-right: 16px; }
.compare a { display: flex; color: #586069; font-size: 13.2px; }
.compare .oi { margin: 1px 4px 0 0; }
.compare .dot { color: #0366d6; margin: 0 auto 0 297px; }
.pr { margin-right: 16px; }
.pr .oi { margin-right: 3px; }
.files { border: 1px solid #e1e4e8; border-radius: 6px; margin-bottom: 16px; height: 93px; }
.commit { display: flex; align-items: center; justify-content: flex-end; height: 55px; margin: -1px -1px 0; padding-right: 17px; background: #f1f8ff; border: 1px solid #c8e1ff; border-bottom-color: #e1e4e8; border-radius: 6px 6px 0 0; color: #586069; }
.commit code { font: 11px "DejaVu Sans Mono", monospace; margin: 2px 8px 0 0; }
.when { margin-right: 15px; }
.commit .oi { color: #24292e; margin-right: 4px; }
.commit b { color: #24292e; }
.file-row { display: flex; justify-content: space-between; align-items: center; height: 37px; padding: 0 16px 0 308px; background: #f6f8fa; border-radius: 0 0 6px 6px; color: #6a737d; }
.file-row span:first-child { color: #586069; letter-spacing: .07px; }

.readme { height: 500px; border: 1px solid #e1e4e8; border-radius: 6px; }
.readme-head { display: flex; justify-content: flex-end; padding: 20px 16px; height: 56px; color: #586069; }
article { padding: 14px 32px 14px 31.5px; font-size: 15.1px; line-height: 24px; white-space: nowrap; letter-spacing: .09px; }
article h1 { font-size: 30.4px; font-weight: 600; line-height: 42px; height: 50px; border-bottom: 1px solid #eaecef; margin-bottom: 16px; letter-spacing: 0; }
article p { margin-bottom: 16px; }

/* Sidebar */
.side { width: 280px; font-size: 11.4px; color: #586069; }
.side h2 { display: flex; justify-content: space-between; font-size: 15.1px; line-height: 22px; font-weight: 600; color: #24292e; margin-bottom: 18px; }
.about h2 .oi { color: #586069; margin-top: 4px; }
.side .about h2 { line-height: 24px; height: 24px; margin-bottom: 16px; letter-spacing: .1px; }
.desc { font-size: 15.1px; line-height: 24px; font-style: italic; margin-bottom: 17px; letter-spacing: .17px; }
.readme-link { display: flex; font-size: 13.2px; line-height: 20px; }
.readme-link .oi { margin: 2px 11.5px 0 0; }
.side section { border-bottom: 1px solid #eaecef; }
.about { height: 150px; }
.releases { height: 125px; padding-top: 25px; }
.side .packages { padding-top: 25px; border: 0; }
.side section > a { display: block; letter-spacing: -.05px; }
.releases p, .packages p, .side section > a { line-height: 18px; }

.scrollbar { display: flex; flex-direction: column; align-items: center; width: 17px; background: #f1f1f1; padding-top: 7px; }
.scrollbar i { border: 4px solid transparent; }
.scrollbar .up { border-top: 0; border-bottom: 4px solid #505050; }
.thumb { width: 13px; height: 352px; margin: 110px 0 0; background: #c1c1c1; }
.scrollbar .down { margin-top: 141px; border-bottom: 0; border-top: 4px solid #505050; }

/* Screen sharing bar */
.share { position: absolute; z-index: 9; left: 484px; top: 573px; display: flex; align-items: center; width: 398px; height: 44px; padding: 0 10px 1px; background: rgba(255,255,255,.97); border: 1px solid #bbb; box-shadow: 0 2px 5px rgba(0,0,0,.3); font-size: 11.4px; white-space: nowrap; }
.grip { width: 6px; height: 11px; border: solid #c4c4c4; border-width: 0 2px; }
.share span { flex: 1; margin-left: 10px; }
.share button { width: 101px; height: 32px; border: 0; border-radius: 3px; background: #1f74e8; color: #fff; font-size: 11.4px; font-weight: 700; letter-spacing: -.15px; padding: 0; margin-right: 10px; }
.share a { color: #4a83e8; }

/* Taskbar */
.taskbar { display: flex; height: 40px; color: #fff;
  background:
    radial-gradient(ellipse 80px 30px at 560px 0, rgba(236,190,90,.7), transparent 75%),
    linear-gradient(20deg, transparent 60%, rgba(130,125,110,.25) 62%, transparent 75%) 880px 0 / 420px 40px no-repeat,
    linear-gradient(90deg, #69533f 0, #6b5846 150px, #79695a 260px, #6a5744 330px, #8a8478 370px, #aa7448 420px, #bd7b4b 500px, #c78c68 580px, #b57c50 680px, #8a6846 740px, #6f5c48 790px, #5f4d3c 880px, #67594a 1010px, #6b6558 1100px, #686055 1200px, #6d5b47 1290px, #5f4c38 1366px);
  box-shadow: inset 0 1px rgba(50,35,25,.35); }
.start { width: 50px; padding: 6px 0 0 12px; }
.start svg { width: 27px; height: 26px; }
.task { width: 62px; display: grid; place-items: center; }
.task svg { width: 32px; height: 32px; }
.task:nth-child(2) svg, .task:nth-child(3) svg { margin-top: -1px; }
.glyph { font: 700 13px "Open Sans", sans-serif; fill: #fff; text-anchor: middle; }
.task-chrome { width: 58px; margin: 1px 1px 1px 2px; padding-right: 6px; background: linear-gradient(#ded9d4, #ded9d4) 53px 0 / 1px 100% no-repeat, linear-gradient(90deg, #a1968b, #958a80); border: 1px solid #d8d2cc; }
.task-chrome + .task { margin-left: 1px; }
.task-github { width: 58px; margin: 1px 0 1px 2px; background: rgba(135,120,100,.6); border: 1px solid #a99a88; }
.tray { display: flex; align-items: center; margin-left: auto; margin-right: 20px; }
.t-up { width: 8px; height: 5px; }
.t-flag { width: 16px; height: 15px; margin-left: 13px; }
.t-bat { width: 10px; height: 15px; margin-left: 14px; }
.t-net { width: 16px; height: 12px; margin-left: 8px; }
.t-vol { width: 16px; height: 14px; margin-left: 8px; }
.clock { width: 46px; margin-left: 20px; display: flex; flex-direction: column; align-items: center; font-size: 11.4px; line-height: 17px; letter-spacing: -.05px; white-space: nowrap; }
```
